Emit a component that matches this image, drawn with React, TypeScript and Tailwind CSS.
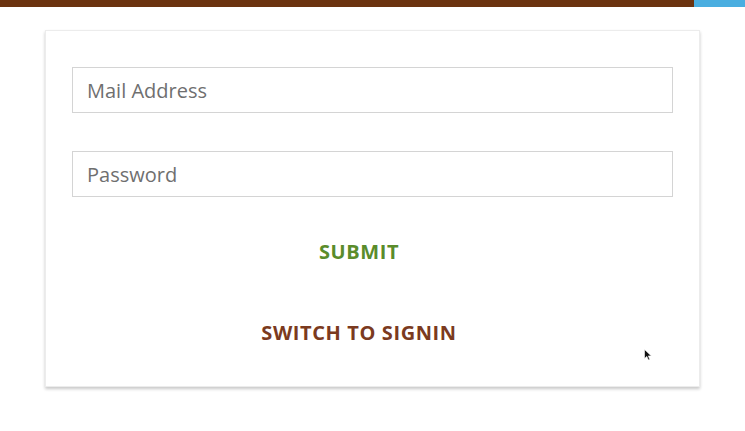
import React from "react";

export default function App() {
  return (
    <div className="min-h-[431px] w-[745px] bg-white" style={{ fontFamily: '"Open Sans", "Liberation Sans", sans-serif' }}>
      <div className="flex h-[7px] w-full">
        <div className="h-full flex-1 bg-[#6b3310]" />
        <div className="h-full w-[51px] bg-[#4aaee0]" />
      </div>
      <div className="relative ml-[45px] mt-[23px] h-[357px] w-[655px] border border-[#ececec] bg-white px-[26px] pt-[36px] shadow-[0_2px_3px_rgba(0,0,0,0.22)]">
        <div className="flex h-[46px] w-full items-center border border-[#d4d4d4] pl-[14px] pt-[2px] text-[20px] text-[#6f6f6f]">
          Mail Address
        </div>
        <div className="mt-[38px] flex h-[46px] w-full items-center border border-[#d4d4d4] pl-[14px] pt-[2px] text-[20px] text-[#6f6f6f]">
          Password
        </div>
        <div className="mt-[37px] flex flex-col items-center pr-[27px]">
          <div className="flex h-[36px] items-center text-[20px] font-bold tracking-[0.6px] text-[#5a8c2b]">SUBMIT</div>
          <div className="mt-[45px] flex h-[36px] items-center text-[20px] font-bold tracking-[0.6px] text-[#7b3a20]">SWITCH TO SIGNIN</div>
        </div>
        <svg className="absolute left-[598px] top-[318px]" width="8" height="12" viewBox="0 0 8 12">
          <path d="M0.5 0.5 L0.5 9.5 L2.8 7.4 L4.4 11 L5.8 10.4 L4.3 6.9 L7.3 6.9 Z" fill="#111" stroke="#fff" strokeWidth="0.6" />
        </svg>
      </div>
    </div>
  );
}
